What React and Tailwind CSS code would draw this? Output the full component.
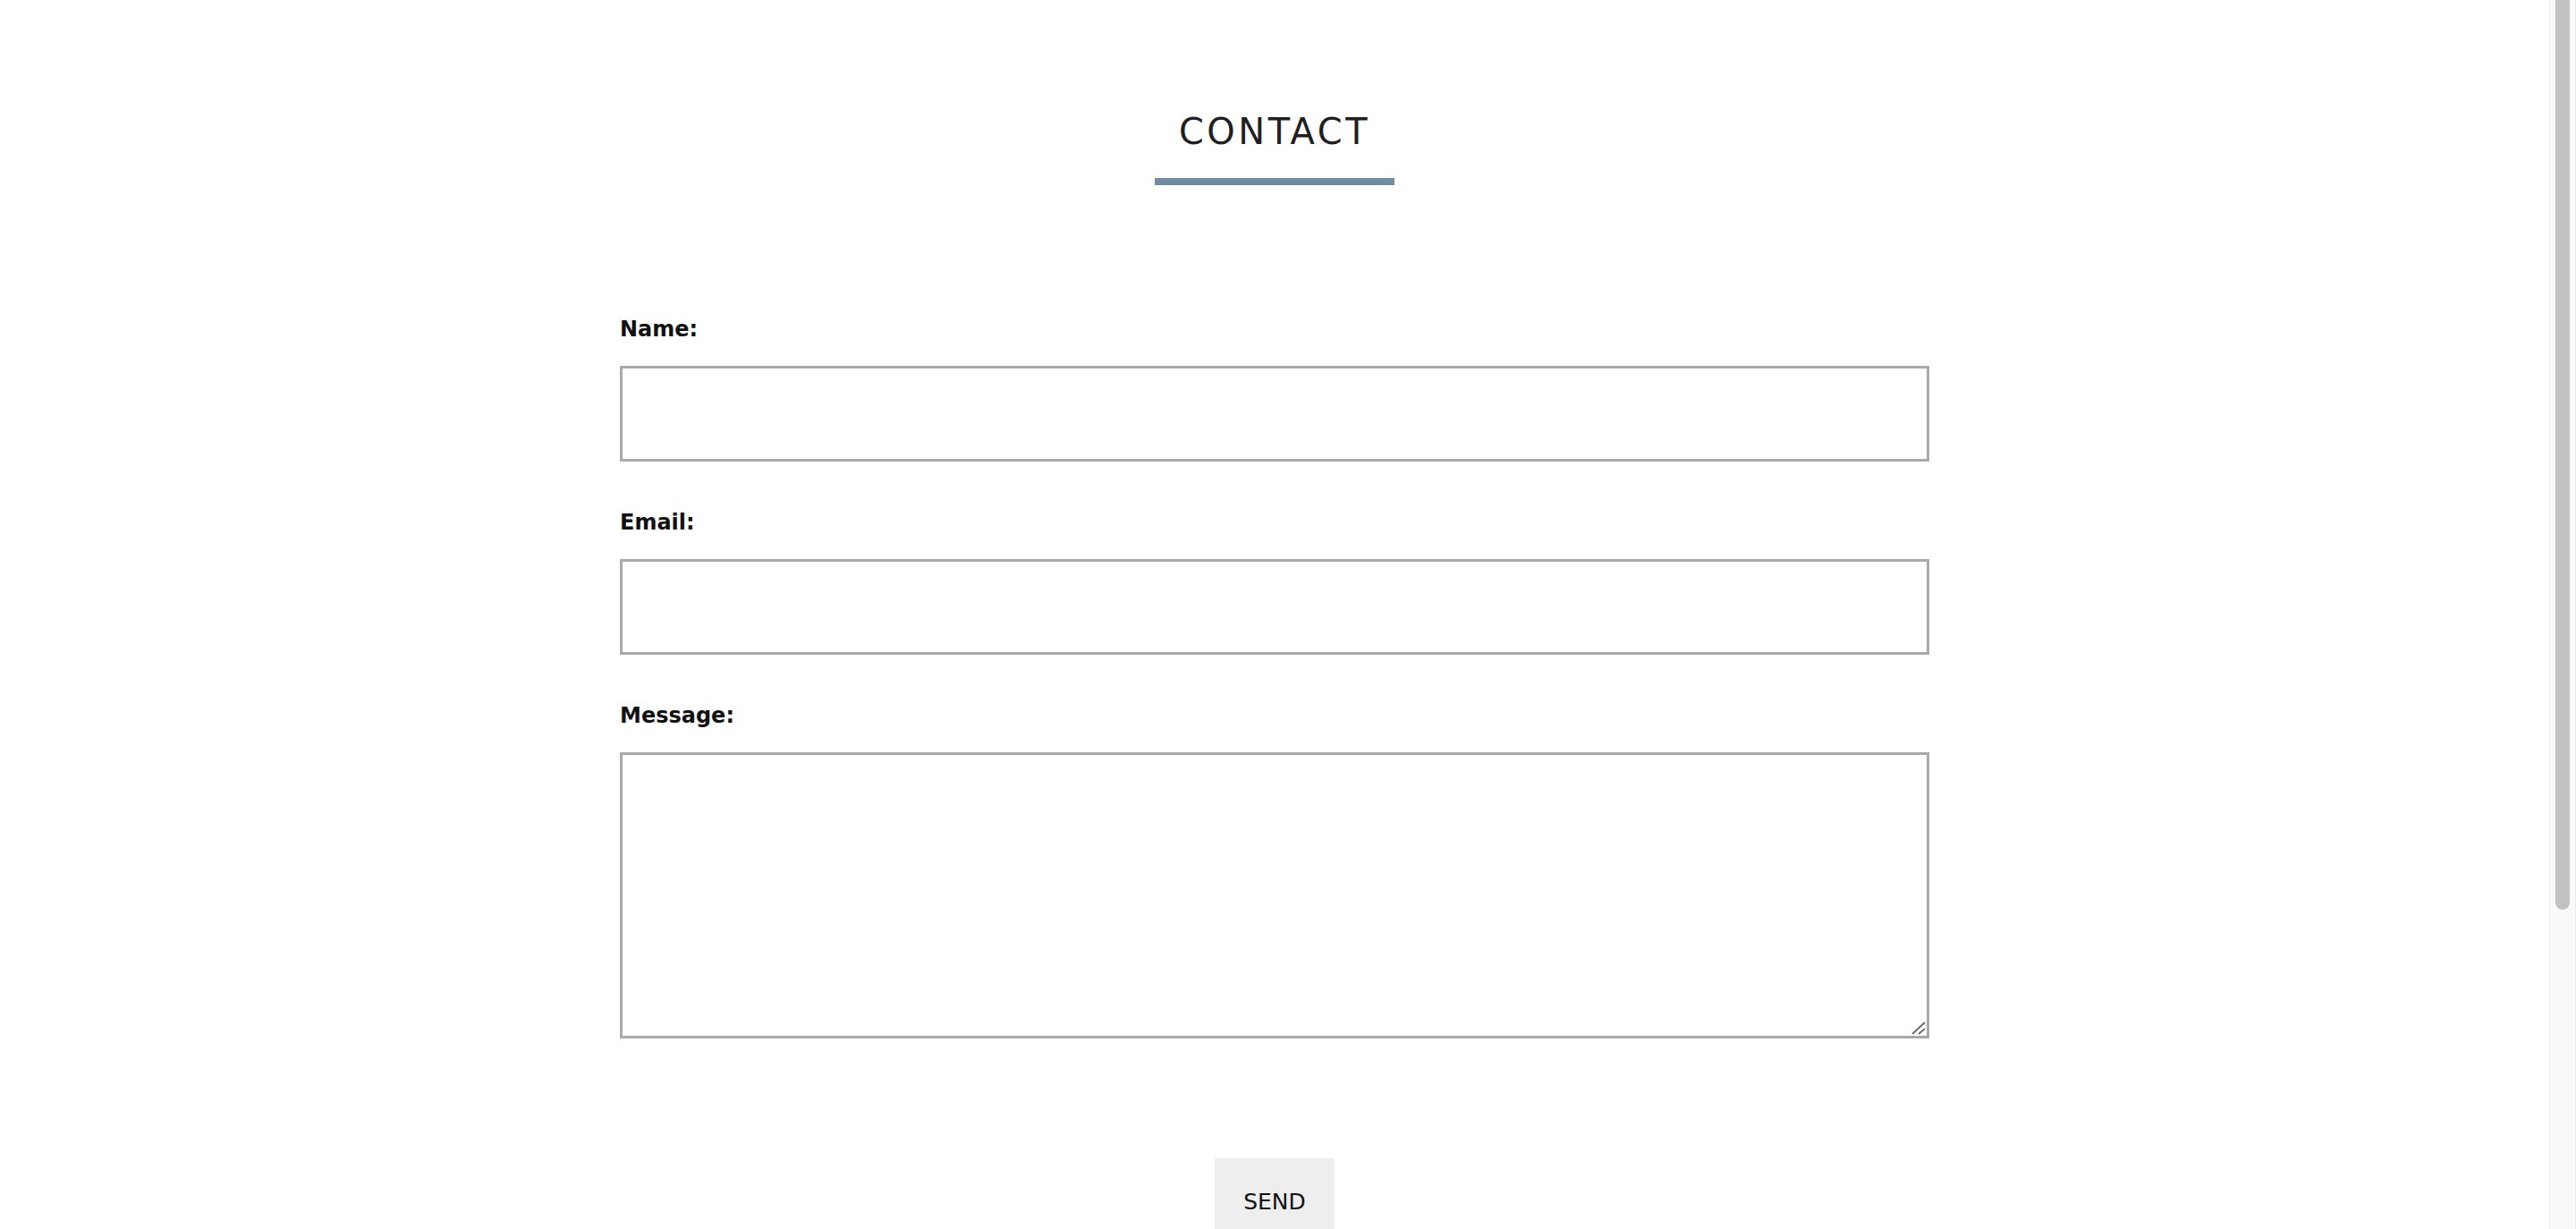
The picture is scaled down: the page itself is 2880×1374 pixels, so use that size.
import React from 'react';

const fields = [
  { label: 'Name:', id: 'name', type: 'text' },
  { label: 'Email:', id: 'email', type: 'email' },
];

const App = () => {
  return (
    <div className="flex h-[1374px] w-full overflow-hidden bg-white font-['DejaVu_Sans',sans-serif]">
      <main className="flex flex-1 flex-col items-center pt-[127px]">
        <h1 className="shrink-0 text-[40px] leading-none font-normal tracking-[3.5px] text-[#1f1f1f]">CONTACT</h1>
        <div className="mt-[32px] h-[8px] w-[268px] shrink-0 bg-[#718ca1]"></div>

        <form className="mt-[149px] flex w-[1464px] shrink-0 flex-col" onSubmit={(e) => e.preventDefault()}>
          {fields.map((field) => (
            <div key={field.id} className="mb-[56px] flex flex-col">
              <label htmlFor={field.id} className="mb-[29px] text-[24px] leading-none font-bold text-[#111]">
                {field.label}
              </label>
              <input
                id={field.id}
                type={field.type}
                className="h-[107px] w-full shrink-0 border-[3px] border-[#a9a9a9] bg-white outline-none"
              />
            </div>
          ))}

          <div className="flex flex-col">
            <label htmlFor="message" className="mb-[29px] text-[24px] leading-none font-bold text-[#111]">
              Message:
            </label>
            <div className="relative shrink-0">
              <textarea
                id="message"
                className="block h-[320px] w-full resize-none border-[3px] border-[#a9a9a9] bg-white outline-none"
              />
              {/* resize grip */}
              <svg className="absolute right-[4px] bottom-[4px]" width="16" height="16" viewBox="0 0 16 16">
                <line x1="1" y1="15" x2="15" y2="2" stroke="#6b6b6b" strokeWidth="2" />
                <line x1="8" y1="15" x2="15" y2="9" stroke="#6b6b6b" strokeWidth="2" />
              </svg>
            </div>
          </div>
        </form>

        <button className="mt-[134px] shrink-0 bg-[#eeeeee] px-[32px] pt-[36px] pb-[36px] text-[25px] leading-none text-[#111]">
          SEND
        </button>
      </main>

      {/* scrollbar */}
      <div className="flex w-[30px] shrink-0 border-l border-r border-[#ebebeb] bg-[#f9f9f9] pl-[6px]">
        <div className="h-[1017px] w-[16px] rounded-b-[8px] bg-[#c1c1c1]"></div>
      </div>
    </div>
  );
};

export default App;
